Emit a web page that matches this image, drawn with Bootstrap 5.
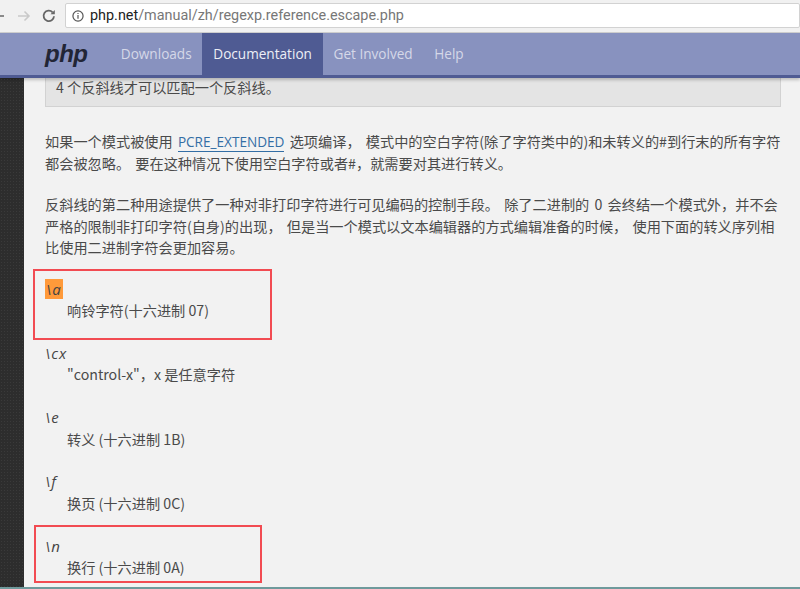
<!DOCTYPE html>
<html lang="zh">
<head>
<meta charset="utf-8">
<title>php.net</title>
<link href="https://cdn.jsdelivr.net/npm/bootstrap@5.3.0/dist/css/bootstrap.min.css" rel="stylesheet">
<style>
html,body{height:589px;overflow:hidden;margin:0}
body{background:#f2f2f2;font-family:"Noto Sans CJK SC","Open Sans",sans-serif;font-size:14.2px;line-height:21.5px;color:#4a4a4a}
.viewport{height:589px;position:relative;overflow:hidden;border-bottom:2px solid #6f9a9c}
.chrome-bar{height:33px;background:#f1f1f1;border-bottom:1px solid #d0d0d0}
.chrome-btns{height:31px;width:65px;flex:none}
.back-tail{width:4px;height:2px;background:#8a8a8a;margin-right:12px}
.nav-arrow{width:16px;height:16px;flex:none}
.nav-fwd{margin-right:9px}
.omnibox{height:25px;background:#fff;border:1px solid #d2d2d2;border-radius:2px;margin-top:3px;padding-left:6px;font-family:"Roboto",sans-serif;font-size:14.4px;color:#777}
.omnibox b{font-weight:400;color:#222}
.info-ico{margin-right:6px}
.phpnav{height:45px;background:#8892bf;border-bottom:3px solid #4f5b93;box-shadow:0 2px 3px rgba(0,0,0,.22);position:relative;z-index:2}
.phplogo{width:110px;padding-left:45px;font:italic 700 24px/42px "Liberation Sans",sans-serif;color:#222535;letter-spacing:-.5px}
.phplink{display:block;height:42px;padding:0 10.800px;line-height:42px;font-family:"Open Sans",sans-serif;font-size:13.6px;color:#d5d8e8;text-decoration:none}
.phplink.on{background:#4f5b93;color:#eceef6}
.rail{width:24px;flex:none;background:#2d2d2d;background-image:radial-gradient(#3a3a3a 1px,transparent 1px);background-size:3px 3px}
.doc{padding-left:21px;width:776px;height:511px;overflow:hidden}
.notebox{width:736px;height:29px;background:#e4e4e4;border:1px solid #d2d2d2;border-top:0;padding:0 10px;line-height:18px;margin-bottom:24px}
.para{width:739px;margin-bottom:20px;word-spacing:2px}
.pcre{color:#336ea5;text-decoration:none;border-bottom:1px solid #336ea5;font-family:"Open Sans",sans-serif;font-size:13.6px}
.term{margin-bottom:21.300px}
.term i{display:block;font-family:"Open Sans",sans-serif;font-size:15px;letter-spacing:1px;color:#444}
.term div{padding-left:22px}
.hit{background:#ff9a3a;padding:0 1px}
.redbox{position:absolute;border:2px solid #f24b52;pointer-events:none;z-index:3}
.box-one{left:33px;top:269px;width:239px;height:71px}
.box-two{left:34px;top:525px;width:228px;height:58px}
</style>
</head>
<body>
<div class="viewport">
  <div class="chrome-bar d-flex align-items-start">
    <div class="chrome-btns d-flex align-items-center">
      <span class="back-tail"></span>
      <svg class="nav-arrow nav-fwd" viewBox="0 0 16 16" fill="none" stroke="#c9c9c9" stroke-width="1.6"><path d="M2 8h11M8.500 3.500 13 8l-4.500 4.500"/></svg>
      <svg class="nav-arrow" viewBox="0 0 16 16" fill="none" stroke="#666" stroke-width="1.8"><path d="M13 8.200A5.200 5.200 0 1 1 11.600 4.300"/><path d="M9.500 6.200h4.300V1.900z" fill="#666" stroke="none"/></svg>
    </div>
    <div class="omnibox flex-grow-1 d-flex align-items-center">
      <svg class="info-ico" width="12" height="12" viewBox="0 0 13 13" fill="none" stroke="#555"><circle cx="6.500" cy="6.500" r="5.500" stroke-width="1.300"/><path d="M6.500 5.500v4M6.500 3.200v1.200" stroke-width="1.300"/></svg>
      <span><b>php.net</b>/manual/zh/regexp.reference.escape.php</span>
    </div>
  </div>
  <nav class="phpnav d-flex">
    <div class="phplogo">php</div>
    <a class="phplink" href="#">Downloads</a>
    <a class="phplink on" href="#">Documentation</a>
    <a class="phplink" href="#">Get Involved</a>
    <a class="phplink" href="#">Help</a>
  </nav>
  <div class="d-flex">
    <div class="rail"></div>
    <main class="doc">
      <div class="notebox">4 个反斜线才可以匹配一个反斜线。</div>
      <p class="para">如果一个模式被使用 <a class="pcre" href="#">PCRE_EXTENDED</a> 选项编译， 模式中的空白字符(除了字符类中的)和未转义的#到行末的所有字符都会被忽略。 要在这种情况下使用空白字符或者#，就需要对其进行转义。</p>
      <p class="para">反斜线的第二种用途提供了一种对非打印字符进行可见编码的控制手段。 除了二进制的 0 会终结一个模式外，并不会严格的限制非打印字符(自身)的出现， 但是当一个模式以文本编辑器的方式编辑准备的时候， 使用下面的转义序列相比使用二进制字符会更加容易。</p>
      <div class="term"><i><span class="hit">\a</span></i><div>响铃字符(十六进制 07)</div></div>
      <div class="term"><i>\cx</i><div>"control-x"，x 是任意字符</div></div>
      <div class="term"><i>\e</i><div>转义 (十六进制 1B)</div></div>
      <div class="term"><i>\f</i><div>换页 (十六进制 0C)</div></div>
      <div class="term"><i>\n</i><div>换行 (十六进制 0A)</div></div>
    </main>
  </div>
  <div class="redbox box-one"></div>
  <div class="redbox box-two"></div>
</div>
</body>
</html>
